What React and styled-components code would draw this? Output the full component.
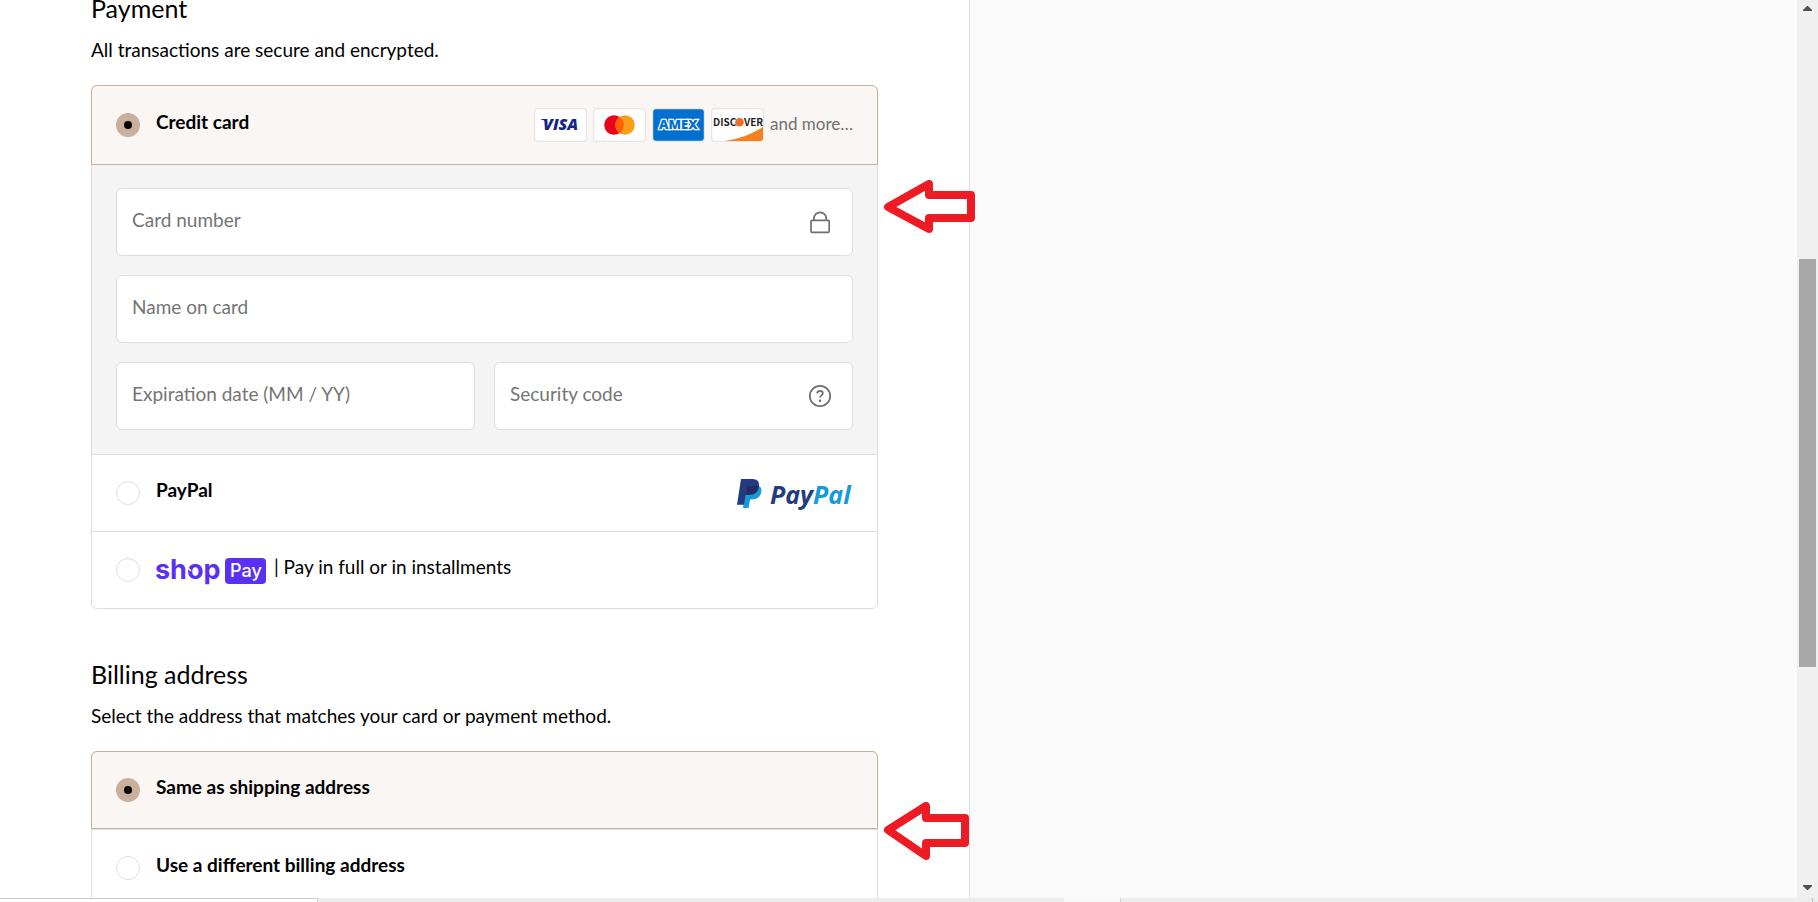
import React from "react";
import styled, { createGlobalStyle } from "styled-components";

const GlobalStyle = createGlobalStyle`
  * {
    box-sizing: border-box;
  }

  body {
    margin: 0;
    background: #fff;
    color: #000;
    font-family: Lato, "Open Sans", sans-serif;
    font-size: 19px;
    line-height: 24px;
  }
`;

// Whole window: page area on top, thin strip at the bottom
const Window = styled.div`
  position: relative;
  display: flex;
  flex-direction: column;
  height: 100vh;
  overflow: hidden;
`;

const Page = styled.div`
  display: flex;
  flex: 1;
  min-height: 0;
`;

const Columns = styled.div`
  display: grid;
  grid-template-columns: 969fr 828fr;
  flex: 1;
  min-width: 0;
  overflow: hidden;
`;

const Checkout = styled.main`
  margin-top: -6px;
  padding: 0 91px;
`;

const Summary = styled.aside`
  background: #fafafa;
  border-left: 1px solid #dedede;
`;

const Section = styled.section`
  margin-bottom: 51px;
`;

const Title = styled.h2`
  margin: 0 0 16px;
  font-size: 25px;
  font-weight: 400;
  line-height: 28px;
`;

const Hint = styled.p`
  margin: 0 0 23px;
`;

const Card = styled.div`
  border: 1px solid #dedede;
  border-radius: 6px;
`;

const Row = styled.div`
  display: flex;
  align-items: center;
  gap: 16px;
  padding: 22px 24px;
  border-top: 1px solid #dedede;

  &:first-child {
    margin: -1px -1px 0;
    border: 1px solid #c8b09a;
    border-radius: 6px 6px 0 0;
    background: #faf6f3;
  }
`;

const Radio = styled.input`
  appearance: none;
  flex: none;
  width: 24px;
  height: 24px;
  margin: 0;
  border: 1px solid #dedede;
  border-radius: 50%;
  background: #fff;

  &:checked {
    border: 8px solid #c8b09a;
    background: #000;
  }
`;

const RowLabel = styled.label`
  display: flex;
  flex: 1;
  gap: 8px;
  min-height: 32px;
  padding-top: 1px;
  font-weight: ${(props) => (props.$plain ? 400 : 700)};
`;

const CardBrands = styled.div`
  display: flex;
  align-items: center;
  gap: 6px;
  height: 34px;
`;

const More = styled.span`
  padding-bottom: 2px;
  color: #707070;
  font-size: 17px;
`;

const Fields = styled.div`
  display: grid;
  grid-template-columns: 1fr 1fr;
  gap: 19px;
  padding: 23px 24px 24px;
  background: #f4f4f4;
`;

const FieldBox = styled.div`
  display: flex;
  align-items: center;
  grid-column: ${(props) => (props.$wide ? "1 / -1" : "auto")};
  height: 68px;
  padding-right: 20px;
  border: 1px solid #dedede;
  border-radius: 6px;
  background: #fff;
  color: #707070;
`;

const Input = styled.input`
  flex: 1;
  min-width: 0;
  height: 100%;
  padding: 0 15px 5px;
  border: 0;
  outline: 0;
  background: transparent;
  color: #000;
  font: inherit;

  &::placeholder {
    color: #757575;
    opacity: 1;
  }
`;

const Logo = styled.svg`
  overflow: visible;
`;

const Scrollbar = styled.div`
  display: flex;
  flex-direction: column;
  align-items: center;
  width: 21px;
  padding: 6px 0 8px;
  background: #f0f0f0;
`;

const Track = styled.div`
  display: grid;
  grid-template-rows: 248fr 408fr 218fr;
  flex: 1;
`;

const Thumb = styled.div`
  grid-row: 2;
  width: 17px;
  background: #a8a8a8;
`;

const StatusStrip = styled.div`
  display: flex;
  height: 4px;
  padding-right: 5px;
  background: #ededed;

  &::after {
    content: "";
    margin-left: auto;
    border-right: 1px solid #b8b8b8;
  }
`;

const StatusTab = styled.div`
  width: 318px;
  border-top: 1px solid #c8c8c8;
  border-right: 1px solid #c8c8c8;
  background: #fff;
`;

const StatusPatch = styled.div`
  width: 57px;
  margin-left: 746px;
  border-right: 1px solid #d4d4d4;
  background: #f8f8f8;
`;

// Annotations drawn over the page
const Arrow = styled.svg`
  position: absolute;
  left: 883px;
  top: ${(props) => props.$top}px;
  pointer-events: none;
`;

const Caret = ({ d }) => (
  <svg width="9" height="5" viewBox="0 0 9 5" aria-hidden="true">
    <path d={d} fill="#505050" />
  </svg>
);

const BrandFrame = ({ label, fill = "#fff", children }) => (
  <svg width="53" height="34" viewBox="0 0 53 34" role="img" aria-label={label}>
    <rect width="53" height="34" rx="4" fill="#000" opacity=".07" />
    <rect x="1.200" y="1.200" width="50.600" height="31.600" rx="3" fill={fill} />
    {children}
  </svg>
);

const Visa = () => (
  <BrandFrame label="Visa">
    <text x="9" y="22" fontFamily="Open Sans" fontSize="16" fontWeight="800" fontStyle="italic" fill="#142688">
      VISA
    </text>
    <path d="M7 11h5l2 5c-1-2-3-3.500-7-4.500z" fill="#142688" />
  </BrandFrame>
);

const Mastercard = () => (
  <BrandFrame label="Mastercard">
    <circle cx="21" cy="17" r="9.800" fill="#eb001b" />
    <circle cx="32" cy="17" r="9.800" fill="#f79e1b" />
    <path d="M26.500 8.900a9.800 9.800 0 0 1 0 16.200a9.800 9.800 0 0 1 0-16.200z" fill="#ff5f00" />
  </BrandFrame>
);

const Amex = () => (
  <BrandFrame label="American Express" fill="#006fcf">
    <text
      x="7"
      y="21"
      fontFamily="Open Sans"
      fontSize="13"
      fontWeight="800"
      fill="#006fcf"
      stroke="#fff"
      strokeWidth="2.500"
      paintOrder="stroke"
    >
      AMEX
    </text>
  </BrandFrame>
);

const Discover = () => (
  <BrandFrame label="Discover">
    <path d="M14 33c14-2 27-7 38-14v11a3 3 0 0 1-3 3z" fill="#f48120" />
    <g fontFamily="Noto Sans CJK SC, Lato" fontSize="10" fontWeight="700" fill="#231f20">
      <text x="2" y="18">DISC</text>
      <text x="33" y="18">VER</text>
    </g>
    <circle cx="28.500" cy="14.200" r="4.300" fill="#e9702a" />
  </BrandFrame>
);

const Lock = () => (
  <svg width="24" height="24" viewBox="0 0 24 24" fill="none" stroke="currentColor" strokeWidth="1.700" aria-hidden="true">
    <rect x="3" y="10.300" width="18.200" height="12" rx="1" />
    <path d="M5.900 10.300V8.500a6.200 6.200 0 0 1 12.400 0v1.800" />
  </svg>
);

const Question = () => (
  <svg width="24" height="24" viewBox="0 0 24 24" fill="none" stroke="currentColor" strokeWidth="1.800" aria-hidden="true">
    <circle cx="12" cy="12" r="10.200" />
    <path d="M9.200 9.300c.2-1.600 1.300-2.400 2.800-2.400s2.800.9 2.800 2.400c0 2-2.800 2.100-2.800 4.200" />
    <circle cx="12" cy="16.800" r="1.300" fill="currentColor" stroke="none" />
  </svg>
);

const PayPalLogo = () => (
  <Logo width="116" height="32" viewBox="0 -2 116 32" role="img" aria-label="PayPal">
    <path d="M8.500 7.500h14.500c2 2 1.600 5 .8 7.200c-1.300 3.800-4.600 5.700-8.800 5.700h-2l-1.400 8.600h-5.600z" fill="#179bd7" />
    <path d="M4 0h11.500c5 0 7.300 2.800 6.300 8c-1 5.500-4.600 7.800-9.600 7.800H8.600L7 25.700H0z" fill="#253b80" />
    <path d="M10.500 7h11.300c.1 5-3.500 8.800-9.600 8.800H8.600z" fill="#222d65" />
    <text x="33" y="25" fontFamily="Open Sans" fontSize="25" fontWeight="700" fontStyle="italic" fill="#253b80">
      Pay<tspan fill="#179bd7">Pal</tspan>
    </text>
  </Logo>
);

const ShopPayLogo = () => (
  <Logo width="110" height="31" viewBox="0 -3 110 31" role="img" aria-label="Shop Pay">
    <text x="-1" y="21" fontFamily="Inter" fontSize="27" fontWeight="700" fill="#5a31f4">
      shop
    </text>
    <path d="M30 8l5 5" stroke="#fff" strokeWidth="1.500" />
    <rect x="69" width="41" height="26" rx="4" fill="#5a31f4" />
    <text x="74" y="19" fontFamily="Inter" fontSize="18" fontWeight="500" fill="#fff">
      Pay
    </text>
  </Logo>
);

const Field = ({ label, wide, icon }) => (
  <FieldBox $wide={wide}>
    <Input type="text" aria-label={label} placeholder={label} />
    {icon}
  </FieldBox>
);

export default function App() {
  return (
    <Window>
      <GlobalStyle />
      <Page>
        <Columns>
          <Checkout>
            <Section>
              <Title>Payment</Title>
              <Hint>All transactions are secure and encrypted.</Hint>
              <Card>
                <Row>
                  <Radio type="radio" name="payment" id="credit" defaultChecked />
                  <RowLabel htmlFor="credit">Credit card</RowLabel>
                  <CardBrands>
                    <Visa />
                    <Mastercard />
                    <Amex />
                    <Discover />
                    <More>and more…</More>
                  </CardBrands>
                </Row>
                <Fields>
                  <Field label="Card number" wide icon={<Lock />} />
                  <Field label="Name on card" wide />
                  <Field label="Expiration date (MM / YY)" />
                  <Field label="Security code" icon={<Question />} />
                </Fields>
                <Row>
                  <Radio type="radio" name="payment" id="paypal" />
                  <RowLabel htmlFor="paypal">PayPal</RowLabel>
                  <PayPalLogo />
                </Row>
                <Row>
                  <Radio type="radio" name="payment" id="shoppay" />
                  <RowLabel htmlFor="shoppay" $plain>
                    <ShopPayLogo />
                    <span>| Pay in full or in installments</span>
                  </RowLabel>
                </Row>
              </Card>
            </Section>

            <Section>
              <Title>Billing address</Title>
              <Hint>Select the address that matches your card or payment method.</Hint>
              <Card>
                <Row>
                  <Radio type="radio" name="billing" id="same" defaultChecked />
                  <RowLabel htmlFor="same">Same as shipping address</RowLabel>
                </Row>
                <Row>
                  <Radio type="radio" name="billing" id="different" />
                  <RowLabel htmlFor="different">Use a different billing address</RowLabel>
                </Row>
              </Card>
            </Section>
          </Checkout>
          <Summary />
        </Columns>
        <Scrollbar>
          <Caret d="M4 0h1l4 4v1H0V4z" />
          <Track>
            <Thumb />
          </Track>
          <Caret d="M0 0h9v1L5 5H4L0 1z" />
        </Scrollbar>
      </Page>
      <StatusStrip>
        <StatusTab />
        <StatusPatch />
      </StatusStrip>

      <Arrow $top={180} width="93" height="54" fill="none" stroke="#ed1c24" strokeWidth="8" strokeLinejoin="round">
        <path d="M5 27L46 4v11h42v23H46v11z" />
      </Arrow>
      <Arrow $top={802} width="86" height="58" fill="none" stroke="#ed1c24" strokeWidth="8" strokeLinejoin="round">
        <path d="M5 28L43 4v12h39v25H43v13z" />
      </Arrow>
    </Window>
  );
}
